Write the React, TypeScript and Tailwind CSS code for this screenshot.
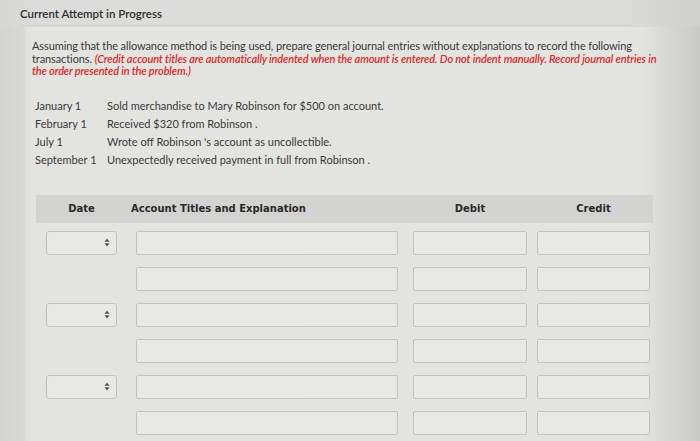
import React from "react";

const rows = [true, false, true, false, true, false];

function SelectArrows() {
  return (
    <svg width="6" height="9" viewBox="0 0 6 9" className="text-[#555]">
      <path d="M3 0.5 L5.5 3.8 H0.5 Z" fill="currentColor" />
      <path d="M3 8.5 L5.5 5.2 H0.5 Z" fill="currentColor" />
    </svg>
  );
}

function Box({ className }: { className: string }) {
  return <div className={`h-[24px] rounded-[2px] border border-[#c2c2bf] bg-[#e8e8e5] ${className}`} />;
}

export default function App() {
  return (
    <div className="h-[441px] w-[700px] overflow-hidden bg-[linear-gradient(to_right,#d3d3cf_0px,#d8d8d4_24px,#e3e3e0_27px,#e4e4e1_640px,#d6d6d2_670px,#c9c9c5_700px)] font-['Lato','Noto_Sans',sans-serif] text-[#363636]">
      <div className="h-[27px] bg-[linear-gradient(to_right,#d6d6d4_0px,#dcdcda_40px,#dcdcda_620px,#cfcfcc_700px)] pl-[20px] pt-[7px]">
        <div className="w-[612px] border-b border-[#cfcfcd] pb-[4px] text-[11.5px] font-semibold leading-[14px] text-[#2f2f2f]">
          Current Attempt in Progress
        </div>
      </div>

      <div className="pl-[32px] pt-[13px]">
        <p className="w-[630px] text-[11px] leading-[12.5px] tracking-[-0.1px] text-[#3a3a3a]">
          Assuming that the allowance method is being used, prepare general journal entries without explanations to record the following
          transactions.{" "}
          <span className="font-semibold italic tracking-[-0.15px] text-[#d92a2a]">
            (Credit account titles are automatically indented when the amount is entered. Do not indent manually. Record journal entries in
            the order presented in the problem.)
          </span>
        </p>

        <div className="mt-[19px] pl-[3px] text-[11px] leading-[18px] text-[#3a3a3a]">
          {[
            ["January 1", "Sold merchandise to Mary Robinson for $500 on account."],
            ["February 1", "Received $320 from Robinson ."],
            ["July 1", "Wrote off Robinson 's account as uncollectible."],
            ["September 1", "Unexpectedly received payment in full from Robinson ."],
          ].map(([d, t]) => (
            <div key={d} className="flex">
              <span className="w-[72px] shrink-0">{d}</span>
              <span>{t}</span>
            </div>
          ))}
        </div>
      </div>

      <div className="ml-[36px] mt-[26px] w-[617px]">
        <div className="flex h-[28px] items-center bg-[#d3d3d1] pl-[10px] font-['DejaVu_Sans',sans-serif] text-[10px] font-bold text-[#2a2a2a]">
          <div className="w-[71px] text-center">Date</div>
          <div className="ml-[14px] w-[267px]">Account Titles and Explanation</div>
          <div className="ml-[15px] w-[114px] text-center">Debit</div>
          <div className="ml-[10px] w-[113px] text-center">Credit</div>
        </div>

        <div className="flex flex-col gap-[12px] pl-[10px] pt-[8px]">
          {rows.map((hasDate, i) => (
            <div key={i} className="flex items-center">
              {hasDate ? (
                <div className="flex h-[24px] w-[71px] items-center justify-end rounded-[3px] border border-[#c2c2bf] bg-[#e8e8e5] pr-[6px]">
                  <SelectArrows />
                </div>
              ) : (
                <div className="w-[71px]" />
              )}
              <Box className="ml-[19px] w-[262px]" />
              <Box className="ml-[15px] w-[114px]" />
              <Box className="ml-[10px] w-[113px]" />
            </div>
          ))}
        </div>
      </div>
    </div>
  );
}
